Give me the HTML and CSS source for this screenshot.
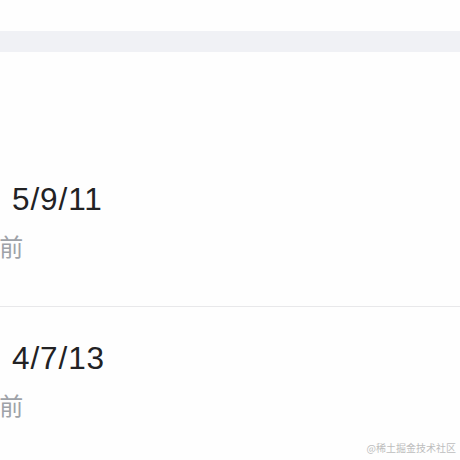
FILE: index.html
```html
<!DOCTYPE html>
<html lang="zh">
<head>
<meta charset="utf-8">
<link rel="stylesheet" href="styles.css">
</head>
<body>
<div class="page">
  <div class="top"></div>
  <div class="band"></div>
  <div class="header"></div>
  <ul class="list">
    <li class="item">
      <div class="date">5/9/11</div>
      <div class="ago">3年前</div>
    </li>
    <li class="item">
      <div class="date">4/7/13</div>
      <div class="ago">3年前</div>
    </li>
  </ul>
  <div class="watermark">@稀土掘金技术社区</div>
</div>
</body>
</html>
```
FILE: styles.css
```css
html, body {
  margin: 0;
  padding: 0;
  background: #fefefe;
}
body {
  width: 460px;
  height: 460px;
  overflow: hidden;
  font-family: "Liberation Sans", Arial, sans-serif;
}
.page {
  position: relative;
  width: 460px;
  height: 460px;
  overflow: hidden;
}
.top {
  height: 31px;
}
.band {
  height: 21px;
  background: #f0f1f5;
}
.header {
  height: 96px;
}
.list {
  list-style: none;
  margin: 0;
  padding: 0;
}
.item {
  height: 158px;
  padding: 33px 0 0 0;
  box-sizing: border-box;
}
.item + .item {
  height: 159px;
  border-top: 1px solid #e8e8ea;
}
.date {
  padding-left: 12px;
  font-size: 31.5px;
  letter-spacing: 0.9px;
  line-height: 36px;
  color: #222224;
}
.ago {
  margin-top: 13px;
  margin-left: -38px;
  font-family: "Noto Sans CJK SC", sans-serif;
  font-size: 24px;
  line-height: 32px;
  color: #9ea2a8;
  white-space: nowrap;
}
.watermark {
  position: absolute;
  right: 4px;
  bottom: 5px;
  font-family: "Noto Sans CJK SC", sans-serif;
  font-size: 10px;
  line-height: 14px;
  color: #bdbdbd;
}
```
